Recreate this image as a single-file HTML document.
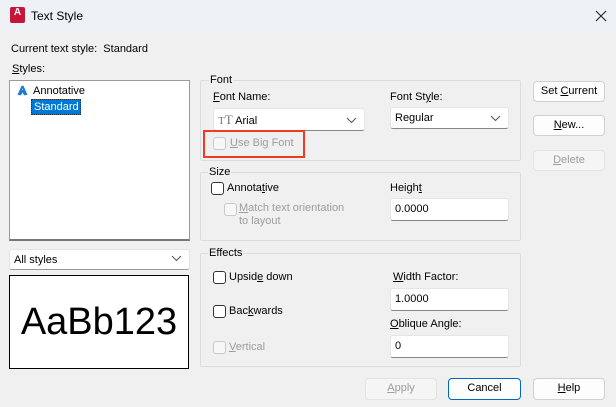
<!DOCTYPE html>
<html><head><meta charset="utf-8"><style>
*{box-sizing:border-box;margin:0;padding:0}
body{width:616px;height:407px;background:#f0f0f0;font-family:"Liberation Sans",sans-serif;font-size:11px;color:#000;position:relative;overflow:hidden}
.a{position:absolute;white-space:nowrap}
.t{line-height:14px}
.grp{position:absolute;border:1px solid #dcdcdc;border-radius:2px}
.lbl{position:absolute;background:#f0f0f0;padding:0 1px;line-height:14px}
.inp{position:absolute;background:#fff;border:1px solid #e5e5e5;border-bottom:1px solid #868686;border-radius:3px;padding-left:4px;line-height:20px}
.btn{position:absolute;background:#fdfdfd;border:1px solid #d0d0d0;border-radius:4px;text-align:center;line-height:19px}
.cb{position:absolute;width:13px;height:13px;border:1px solid #333;border-radius:3px;background:#fff}
.cb.d{border-color:#c8c8c8;background:#f7f7f7}
.dis{color:#9d9d9d}
.chev{position:absolute;right:7px;top:5px}
u{text-decoration:underline}
</style></head><body>
<div class="a" style="left:0;top:0;width:616px;height:31px;background:#eef2f7"></div>
<div class="a" style="left:10px;top:7px;width:15px;height:16px;background:#c7163a;border-radius:2px;color:#fff;font-size:10px;font-weight:bold;text-align:center;line-height:12px">A</div>
<div class="a t" style="left:31px;top:9px;font-size:12px">Text Style</div>
<svg class="a" style="left:595px;top:10px" width="12" height="12"><path d="M1 1L11 11M11 1L1 11" stroke="#222" stroke-width="1.1"/></svg>

<div class="a t" style="left:11px;top:42px">Current text style:&nbsp; Standard</div>
<div class="a t" style="left:12px;top:62px"><u>S</u>tyles:</div>
<div class="a" style="left:9px;top:80px;width:181px;height:161px;background:#fff;border:1px solid #9a9a9a;border-bottom:2px solid #777"></div>
<svg class="a" style="left:17px;top:85px" width="11" height="11"><path d="M5.5 1L1.5 10M5.5 1L9.5 10M5.5 5L3 10M5.5 5L8 10" stroke="#1f7ad6" stroke-width="2" fill="none"/></svg>
<div class="a t" style="left:33px;top:84px">Annotative</div>
<div class="a t" style="left:31px;top:99px;width:50px;height:16px;background:#0078d7;color:#fff;border:1px dotted #333;padding-left:2px;line-height:14px">Standard</div>

<div class="inp" style="left:9px;top:249px;width:181px;height:21px;border-bottom-color:#999">All styles<svg class="chev" width="11" height="7"><path d="M1 1L5.5 5.5L10 1" stroke="#555" fill="none"/></svg></div>
<div class="a" style="left:9px;top:275px;width:180px;height:94px;background:#fff;border:1px solid #000;text-align:center;font-size:38px;line-height:92px">AaBb123</div>

<div class="grp" style="left:200px;top:80px;width:321px;height:81px"></div>
<div class="lbl" style="left:209px;top:73px">Font</div>
<div class="a t" style="left:213px;top:90px"><u>F</u>ont Name:</div>
<div class="inp" style="left:213px;top:108px;width:152px;height:23px;line-height:21px"><span style="color:#777;font-family:'Liberation Serif',serif;font-size:11px">T<span style="font-size:13px">T</span></span> Arial<svg class="chev" style="top:8px" width="11" height="7"><path d="M1 1L5.5 5.5L10 1" stroke="#555" fill="none"/></svg></div>
<div class="a t" style="left:390px;top:90px">Font St<u>y</u>le:</div>
<div class="inp" style="left:390px;top:107px;width:119px;height:22px">Regular<svg class="chev" style="top:7px" width="11" height="7"><path d="M1 1L5.5 5.5L10 1" stroke="#555" fill="none"/></svg></div>
<div class="cb d" style="left:213px;top:137px"></div>
<div class="a t dis" style="left:230px;top:136px"><u>U</u>se Big Font</div>
<div class="a" style="left:203px;top:130px;width:102px;height:28px;border:2px solid #ee3b24"></div>

<div class="grp" style="left:200px;top:172px;width:321px;height:69px"></div>
<div class="lbl" style="left:208px;top:165px">Size</div>
<div class="cb" style="left:211px;top:182px"></div>
<div class="a t" style="left:227px;top:181px">Annota<u>t</u>ive</div>
<div class="cb d" style="left:224px;top:203px"></div>
<div class="a t dis" style="left:239px;top:202px;line-height:13px"><u>M</u>atch text orientation<br>to layout</div>
<div class="a t" style="left:390px;top:181px">Heigh<u>t</u></div>
<div class="inp" style="left:390px;top:198px;width:119px;height:23px">0.0000</div>

<div class="grp" style="left:200px;top:253px;width:321px;height:114px"></div>
<div class="lbl" style="left:208px;top:246px">Effects</div>
<div class="cb" style="left:213px;top:271px"></div>
<div class="a t" style="left:229px;top:270px">Upsid<u>e</u> down</div>
<div class="cb" style="left:213px;top:305px"></div>
<div class="a t" style="left:229px;top:304px">Bac<u>k</u>wards</div>
<div class="cb d" style="left:213px;top:341px"></div>
<div class="a t dis" style="left:229px;top:340px"><u>V</u>ertical</div>
<div class="a t" style="left:393px;top:270px"><u>W</u>idth Factor:</div>
<div class="inp" style="left:390px;top:288px;width:119px;height:23px">1.0000</div>
<div class="a t" style="left:390px;top:317px"><u>O</u>blique Angle:</div>
<div class="inp" style="left:390px;top:335px;width:119px;height:23px">0</div>

<div class="btn" style="left:533px;top:81px;width:72px;height:21px">Set <u>C</u>urrent</div>
<div class="btn" style="left:533px;top:115px;width:72px;height:21px"><u>N</u>ew...</div>
<div class="btn dis" style="left:533px;top:150px;width:72px;height:21px;background:#f5f5f5;border-color:#e3e3e3"><u>D</u>elete</div>
<div class="btn dis" style="left:365px;top:378px;width:72px;height:22px;background:#f5f5f5;border-color:#e3e3e3"><u>A</u>pply</div>
<div class="btn" style="left:448px;top:378px;width:73px;height:22px;border-color:#0067c0">Cancel</div>
<div class="btn" style="left:533px;top:378px;width:72px;height:22px"><u>H</u>elp</div>
</body></html>
